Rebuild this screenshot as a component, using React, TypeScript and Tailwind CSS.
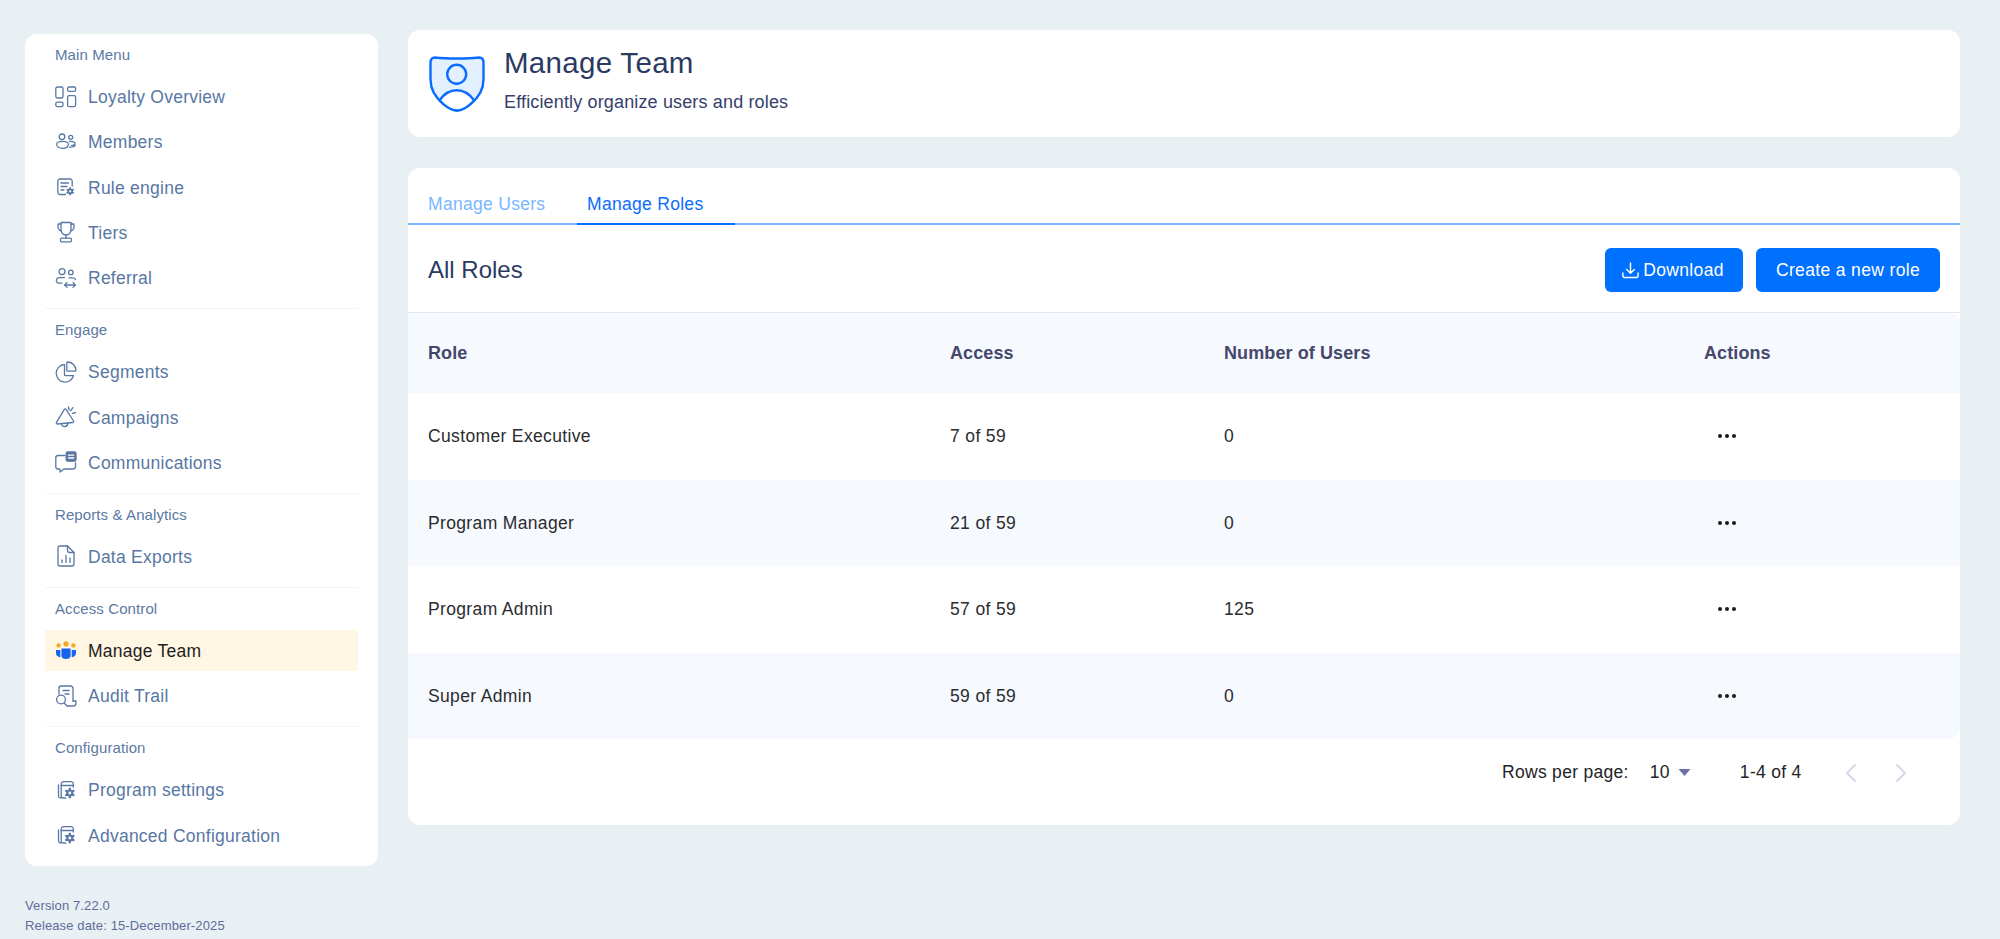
import React from "react";
import { ChevronLeft, ChevronRight } from "lucide-react";

function NavSvg({ children }: { children: React.ReactNode }) {
  return (
    <svg viewBox="0 0 22 22" className="w-[22px] h-[22px] shrink-0" fill="none" stroke="currentColor" strokeWidth="1.3" strokeLinecap="round" strokeLinejoin="round">
      {children}
    </svg>
  );
}

// small filled cog, sits over the corner of a document icon
const Gear = ({ cx, cy, r }: { cx: number; cy: number; r: number }) => {
  const t = r * 1.45;
  const dx = t * 0.866;
  const dy = t * 0.5;
  return (
    <g>
      <circle cx={cx} cy={cy} r={r * 1.65} fill="#fff" stroke="none" />
      <circle cx={cx} cy={cy} r={r} fill="currentColor" stroke="none" />
      <path
        d={`M${cx} ${cy - t}V${cy + t}M${cx - dx} ${cy - dy}L${cx + dx} ${cy + dy}M${cx - dx} ${cy + dy}L${cx + dx} ${cy - dy}`}
        strokeWidth={r * 0.62}
        strokeLinecap="butt"
      />
      <circle cx={cx} cy={cy} r={r * 0.4} fill="#fff" stroke="none" />
    </g>
  );
};

const settingsIcon = (
  <NavSvg>
    <path d="M5.500 19h-.2a2 2 0 0 1-1.800-2V6" />
    <path d="M11 19H8.200a2 2 0 0 1-2-2V5a2.300 2.300 0 0 1 2.300-2.300H16A2.300 2.300 0 0 1 18.300 5v3" />
    <path d="M6.200 6.500h12.100" />
    <Gear cx={14.800} cy={14} r={3.600} />
  </NavSvg>
);

const icons: Record<string, React.ReactNode> = {
  overview: (
    <NavSvg>
      <rect x="0.8" y="1" width="7.2" height="11" rx="1.6" />
      <rect x="12.6" y="1" width="8" height="4.4" rx="1.6" />
      <rect x="0.8" y="16.2" width="7.2" height="4.4" rx="1.6" />
      <rect x="12.6" y="9.6" width="8" height="11" rx="1.6" />
    </NavSvg>
  ),
  members: (
    <NavSvg>
      <circle cx="7" cy="5.800" r="2.800" />
      <circle cx="15.700" cy="6.300" r="2" />
      <path d="M1.700 13.200c0-2 1.800-2.900 5.800-2.900s5.800.9 5.800 2.900-1.800 4.100-5.800 4.100-5.800-2.100-5.800-4.100z" />
      <path d="M14.500 10.500c3.600-.3 5.600.6 5.600 1.900s-1.400 2-3.400 2M14.300 16.100c3 .3 5.200-.2 5.800-1.500" />
    </NavSvg>
  ),
  rule: (
    <NavSvg>
      <path d="M10.500 18.500H5a2.200 2.200 0 0 1-2.200-2.200V5.200A2.200 2.200 0 0 1 5 3h10a2.200 2.200 0 0 1 2.200 2.200V10" />
      <path d="M6 7h7.500M6 10.500h6M6 14h3" />
      <Gear cx={15.200} cy={15.300} r={2.800} />
    </NavSvg>
  ),
  tiers: (
    <NavSvg>
      <path d="M6 1.500h10v7.500a5 5 0 0 1-10 0V1.500z" />
      <path d="M6 3H3.200c-.8 3.600.6 6.400 3.400 7.200M16 3h2.800c.8 3.600-.6 6.400-3.400 7.200" />
      <path d="M11 14v3.200" />
      <rect x="5.500" y="17.200" width="11" height="3.600" rx="1.200" />
    </NavSvg>
  ),
  referral: (
    <NavSvg>
      <circle cx="7" cy="4.600" r="3" />
      <circle cx="15.800" cy="5.400" r="2.300" />
      <path d="M9.500 10.600H5c-2.600 0-3.600 1.400-3.600 2.800s1 2.800 3.600 2.800h2M14 10.800h3.400c1.600 0 2.800.6 3.200 1.800" />
      <path d="M9.500 18h11M12 15.600 9.500 18l2.500 2.400M18 15.600l2.500 2.400-2.500 2.400" />
    </NavSvg>
  ),
  segments: (
    <NavSvg>
      <path d="M9.500 3.500a8.800 8.800 0 1 0 9 11.200H10.500a1 1 0 0 1-1-1V3.500z" />
      <path d="M12.800 1c4.400.2 8 3.800 8.200 8.200a1 1 0 0 1-1 1h-7.200a1 1 0 0 1-1-1V2a1 1 0 0 1 1-1z" />
    </NavSvg>
  ),
  campaigns: (
    <NavSvg>
      <path d="M9.300 3.300a1 1 0 0 1 1.700.1L18.600 15a1 1 0 0 1-.8 1.500L2.500 18a1.100 1.100 0 0 1-1-1.700z" />
      <path d="M6.500 17.600c.3 2.200 1.800 3.300 3.600 2.900 1.700-.4 2.900-1.900 2.700-3.500" />
      <path d="M13.300.8l.8 3.200M18 1.500l-2.200 3.200M20.500 6.500l-3 .8" />
    </NavSvg>
  ),
  communications: (
    <NavSvg>
      <path d="M10 4.500H3A2.200 2.200 0 0 0 .800 6.700v9.100A2.200 2.200 0 0 0 3 18h1.800l.4 3 3.500-3H18a2.500 2.500 0 0 0 2.500-2.500V12" />
      <rect x="11.200" y="1" width="9.800" height="9.200" rx="1.500" fill="currentColor" />
      <path d="M13.500 4.200h5.200M13.500 7h5.200" stroke="#fff" />
    </NavSvg>
  ),
  exports: (
    <NavSvg>
      <path d="M12.500 1H5a2 2 0 0 0-2 2v16a2 2 0 0 0 2 2h12a2 2 0 0 0 2-2V7.500z" />
      <path d="M12.500 1v4.500a2 2 0 0 0 2 2H19" />
      <path d="M7 17.500v-2.500M11 17.500V10.500M15 17.500v-4.500" />
    </NavSvg>
  ),
  team: (
    <svg viewBox="0 0 22 22" className="w-[22px] h-[22px] shrink-0">
      <circle cx="3.600" cy="6.400" r="2.200" fill="#f5a623" />
      <circle cx="11" cy="4.800" r="2.600" fill="#f5a623" />
      <circle cx="18.400" cy="6.400" r="2.200" fill="#f5a623" />
      <path d="M1 11h4.300v7.200C2.800 18 1 16.400 1 14z" fill="#1565f0" />
      <path d="M6.400 9.400h9.200v7c0 2.200-2 3.600-4.600 3.600s-4.600-1.400-4.600-3.600z" fill="#1565f0" />
      <path d="M21 11h-4.300v7.200c2.500-.2 4.300-1.800 4.300-4.200z" fill="#1565f0" />
    </svg>
  ),
  audit: (
    <NavSvg>
      <path d="M4 9V3.200A2.200 2.200 0 0 1 6.200 1h9.300A2.500 2.500 0 0 1 18 3.500V16" />
      <path d="M8 5.500h6M10 9h4" />
      <circle cx="6" cy="14.500" r="4.400" />
      <path d="m9.200 18 2.800 3h6.200a2.800 2.800 0 0 0 2.800-2.800v-2.200h-3" />
    </NavSvg>
  ),
  settings: settingsIcon,
};

const sections = [
  {
    label: "Main Menu",
    items: [
      { name: "Loyalty Overview", icon: "overview" },
      { name: "Members", icon: "members" },
      { name: "Rule engine", icon: "rule" },
      { name: "Tiers", icon: "tiers" },
      { name: "Referral", icon: "referral" },
    ],
  },
  {
    label: "Engage",
    items: [
      { name: "Segments", icon: "segments" },
      { name: "Campaigns", icon: "campaigns" },
      { name: "Communications", icon: "communications" },
    ],
  },
  { label: "Reports & Analytics", items: [{ name: "Data Exports", icon: "exports" }] },
  {
    label: "Access Control",
    items: [
      { name: "Manage Team", icon: "team", active: true },
      { name: "Audit Trail", icon: "audit" },
    ],
  },
  {
    label: "Configuration",
    items: [
      { name: "Program settings", icon: "settings" },
      { name: "Advanced Configuration", icon: "settings" },
    ],
  },
];

const roles = [
  { role: "Customer Executive", access: "7 of 59", users: "0" },
  { role: "Program Manager", access: "21 of 59", users: "0" },
  { role: "Program Admin", access: "57 of 59", users: "125" },
  { role: "Super Admin", access: "59 of 59", users: "0" },
];

function Sidebar() {
  return (
    <div className="w-[353px] shrink-0 ml-[25px] mt-[34px]">
      <aside className="bg-white rounded-[12px] h-[832px] px-[20px] overflow-hidden">
        {sections.map((s, i) => (
          <div key={s.label} className={i > 0 ? "border-t border-[#f2f4f6] mt-[10px]" : ""}>
            <div className="h-[20px] mt-[11px] px-[10px] flex items-center text-[15px] tracking-[0.1px] text-[#5b79a3]">
              {s.label}
            </div>
            <div className="mt-[11px] flex flex-col gap-[4.33px]">
              {s.items.map((it) => (
                <div
                  key={it.name}
                  className={`h-[41px] flex items-center gap-[11px] pl-[10px] text-[17.5px] tracking-[0.25px] ${
                    "active" in it && it.active ? "bg-[#fff6e3] text-[#1f1f1f]" : "text-[#5877a4]"
                  }`}
                >
                  {icons[it.icon]}
                  <span className="pt-[1px]">{it.name}</span>
                </div>
              ))}
            </div>
          </div>
        ))}
      </aside>
      <div className="mt-[30px] text-[13px] leading-[20px] text-[#5f6b9c] tracking-[0.13px]">
        <div>Version 7.22.0</div>
        <div>Release date: 15-December-2025</div>
      </div>
    </div>
  );
}

function DownloadIcon() {
  return (
    <svg viewBox="0 0 20 20" className="w-[19px] h-[19px]" fill="none" stroke="currentColor" strokeWidth="1.5" strokeLinecap="round" strokeLinejoin="round">
      <path d="M10 2v10.500M6 9l4 3.800L14 9" />
      <path d="M2 12.500v2.800a2 2 0 0 0 2 2h12a2 2 0 0 0 2-2v-2.800" />
    </svg>
  );
}

function RolesTable() {
  return (
    <div className="border-t border-[#e4e6f2]">
      <div className="grid grid-cols-[522px_274px_480px_1fr] items-center h-[80px] pl-[20px] bg-[#f6f9fd] rounded-tr-[12px] text-[18px] tracking-[0.1px] font-bold text-[#45486c]">
        <div>Role</div>
        <div>Access</div>
        <div>Number of Users</div>
        <div>Actions</div>
      </div>
      {roles.map((r, i) => (
        <div
          key={r.role}
          className={`grid grid-cols-[522px_274px_480px_1fr] items-center h-[86.500px] pl-[20px] text-[17.500px] tracking-[0.35px] text-[#2a2c30] ${
            i % 2 === 1 ? "bg-[#f6f9fd]" : "bg-white"
          } ${i === 3 ? "rounded-br-[12px]" : ""}`}
        >
          <div>{r.role}</div>
          <div>{r.access}</div>
          <div>{r.users}</div>
          <div className="pl-[14px] flex gap-[3.200px]">
            <span className="w-[4px] h-[4px] rounded-full bg-[#1a1a1a]" />
            <span className="w-[4px] h-[4px] rounded-full bg-[#1a1a1a]" />
            <span className="w-[4px] h-[4px] rounded-full bg-[#1a1a1a]" />
          </div>
        </div>
      ))}
    </div>
  );
}

export default function App() {
  return (
    <div className="flex h-[939px] w-[2000px] overflow-hidden bg-[#e9f0f3] font-['Liberation_Sans',Arial,sans-serif]">
      <Sidebar />
      <main className="w-[1552px] ml-[30px] mt-[30px]">
        <section className="bg-white rounded-[12px] h-[107px] flex items-center pl-[21px] gap-[19px]">
          <svg viewBox="0 0 56 56" className="w-[56px] h-[56px] shrink-0" fill="none">
            <path d="M1.500 6.500C1.500 3.500 3 1.500 6 1.500c7 .8 15 1 22 1s15-.2 22-1c3 0 4.500 2 4.500 5v17c0 12-6 19-13 24.500-5 4-11 6.500-13.500 6.500S19.500 52 14.500 48C7.500 42.500 1.500 35.500 1.500 23.500z" fill="#e3f0ff" stroke="#0a6cff" strokeWidth="2.400" />
            <circle cx="27.700" cy="18.300" r="9.500" fill="#e3f0ff" stroke="#0a6cff" strokeWidth="2.400" />
            <path d="M10.500 44.500C15 37.800 21 34.300 27.700 34.300s12.700 3.500 17.500 10.200C39 51 32 54.500 28 54.500s-11-3.500-17.500-10z" fill="#fff" stroke="#0a6cff" strokeWidth="2.400" />
          </svg>
          <div className="self-start pt-[14px]">
            <h1 className="text-[29.500px] leading-[38px] tracking-[0.3px] text-[#2b3a63]">Manage Team</h1>
            <p className="text-[18px] leading-[24px] mt-[7.500px] tracking-[0.15px] text-[#34406a]">Efficiently organize users and roles</p>
          </div>
        </section>

        <section className="bg-white rounded-[12px] mt-[31px] h-[657px]">
          <div className="h-[57px] pl-[10px] flex border-b-2 border-[#7ab6ff] text-[17.500px] leading-[22px] tracking-[0.3px]">
            <div className="w-[159px] pl-[10px] pt-[25px] text-[#7ab6ff]">Manage Users</div>
            <div className="w-[158px] -mb-[2px] pl-[10px] pt-[25px] text-[#0a6cff] border-b-2 border-[#0a6cff]">Manage Roles</div>
          </div>
          <div className="h-[87px] flex items-center justify-between px-[20px] pt-[3px]">
            <h2 className="text-[24px] text-[#2b3a63]">All Roles</h2>
            <div className="flex gap-[13px] text-[17.500px] tracking-[0.35px] text-white">
              <button className="h-[44px] w-[138px] rounded-[6px] bg-[#0070ff] flex items-center justify-center gap-[3px] pr-[3px]">
                <DownloadIcon />
                <span>Download</span>
              </button>
              <button className="h-[44px] w-[184px] rounded-[6px] bg-[#0070ff]">Create a new role</button>
            </div>
          </div>
          <RolesTable />
          <div className="h-[70px] pb-[3px] flex items-center text-[17.500px] tracking-[0.3px] text-[#222428] pl-[1094px]">
            <span>Rows per page:</span>
            <span className="ml-[21px]">10</span>
            <svg viewBox="0 0 12 7" className="ml-[8px] w-[13px] h-[7px]"><path d="M0 0h12L6 7z" fill="#6b6fa3" /></svg>
            <span className="ml-[49px]">1-4 of 4</span>
            <ChevronLeft className="ml-[33.500px] w-[32px] h-[32px] text-[#d5d8e8]" strokeWidth={1.500} />
            <ChevronRight className="ml-[18px] w-[32px] h-[32px] text-[#d5d8e8]" strokeWidth={1.500} />
          </div>
        </section>
      </main>
    </div>
  );
}
